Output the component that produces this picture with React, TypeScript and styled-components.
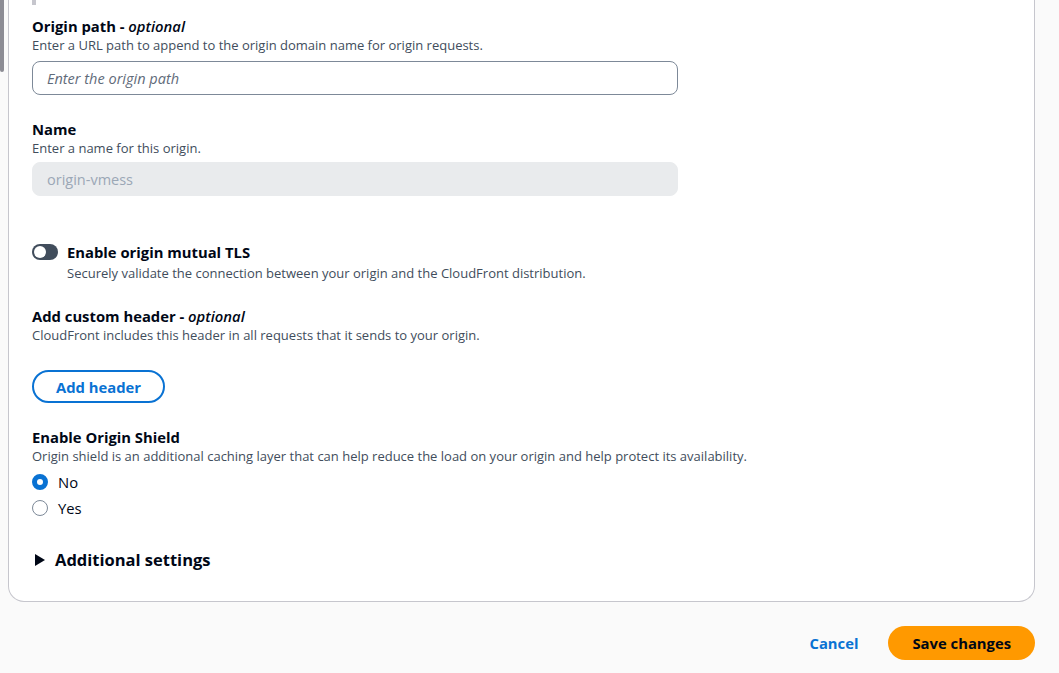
import React from 'react';
import styled, { createGlobalStyle } from 'styled-components';

const Global = createGlobalStyle`
  body { margin: 0; background: #fafafa; font-family: "Open Sans", "Noto Sans", sans-serif; color: #000716; }
`;

const Page = styled.div`
  position: relative;
  padding: 0 24px 0 8px;
  height: 673px;
  box-sizing: border-box;
`;

const ScrollThumb = styled.div`
  position: absolute;
  left: 0;
  top: 0;
  width: 4px;
  height: 72px;
  background: #8c8c94;
  border-radius: 0 0 2px 2px;
`;

const Card = styled.div`
  position: relative;
  background: #fff;
  border: 1px solid #c6c6cd;
  border-top: none;
  border-radius: 0 0 16px 16px;
  padding: 16px 23px 30px;
  display: flex;
  flex-direction: column;
`;

const TopMark = styled.div`
  position: absolute;
  left: 23px;
  top: 0;
  width: 4px;
  height: 5px;
  background: #c6c6cd;
`;

const Field = styled.div<{ $mb: number }>`
  display: flex;
  flex-direction: column;
  margin-bottom: ${p => p.$mb}px;
`;

const Label = styled.div`
  font-size: 14.8px;
  font-weight: 700;
  line-height: 20px;
  em { font-weight: 600; }
`;

const Desc = styled.div`
  font-size: 13px;
  line-height: 18px;
  color: #414d5c;
`;

const Input = styled.div<{ $disabled?: boolean }>`
  margin-top: 7px;
  width: 646px;
  height: 34px;
  box-sizing: border-box;
  border-radius: 8px;
  padding: 0 14px;
  display: flex;
  align-items: center;
  font-size: 14.5px;
  border: ${p => (p.$disabled ? '1px solid #e9ebed' : '1px solid #7d8998')};
  background: ${p => (p.$disabled ? '#e9ebed' : '#fff')};
  color: ${p => (p.$disabled ? '#9ba7b6' : '#5f6b7a')};
  font-style: ${p => (p.$disabled ? 'normal' : 'italic')};
`;

const ToggleRow = styled.div`
  display: flex;
  gap: 9px;
  align-items: flex-start;
  margin-bottom: 24px;
`;

const Toggle = styled.div`
  width: 26px;
  height: 16px;
  border-radius: 8px;
  background: #414d5c;
  position: relative;
  margin-top: 2px;
  &::after {
    content: '';
    position: absolute;
    left: 2px;
    top: 2px;
    width: 12px;
    height: 12px;
    border-radius: 50%;
    background: #fff;
  }
`;

const OutlineButton = styled.button`
  align-self: flex-start;
  height: 33px;
  padding: 0 22px;
  border: 2px solid #0972d3;
  border-radius: 20px;
  background: #fff;
  color: #0972d3;
  font: 700 14.8px "Open Sans", sans-serif;
  margin-bottom: 24px;
`;

const RadioRow = styled.label`
  display: flex;
  align-items: center;
  gap: 10px;
  font-size: 14.8px;
  height: 26px;
`;

const Radio = styled.span<{ $checked?: boolean }>`
  width: 16px;
  height: 16px;
  box-sizing: border-box;
  border-radius: 50%;
  border: ${p => (p.$checked ? '5px solid #0972d3' : '1px solid #7d8998')};
  background: #fff;
`;

const Expander = styled.div`
  display: flex;
  align-items: center;
  gap: 10px;
  font-size: 16.5px;
  font-weight: 700;
  margin-top: 27px;
  padding-left: 3px;
`;

const Footer = styled.div`
  display: flex;
  justify-content: flex-end;
  align-items: center;
  gap: 18px;
  margin-top: 24px;
`;

const LinkButton = styled.button`
  background: none;
  border: none;
  color: #0972d3;
  font: 700 14.8px "Open Sans", sans-serif;
  padding: 0 12px;
`;

const PrimaryButton = styled.button`
  height: 34px;
  padding: 0 24px;
  border: none;
  border-radius: 20px;
  background: #ff9900;
  color: #000716;
  font: 700 14.8px "Open Sans", sans-serif;
`;

export default function App() {
  return (
    <Page>
      <Global />
      <ScrollThumb />
      <Card>
        <TopMark />
        <Field $mb={24}>
          <Label>Origin path - <em>optional</em></Label>
          <Desc>Enter a URL path to append to the origin domain name for origin requests.</Desc>
          <Input>Enter the origin path</Input>
        </Field>
        <Field $mb={46}>
          <Label>Name</Label>
          <Desc>Enter a name for this origin.</Desc>
          <Input $disabled style={{ marginTop: 5 }}>origin-vmess</Input>
        </Field>
        <ToggleRow>
          <Toggle />
          <div>
            <Label>Enable origin mutual TLS</Label>
            <Desc style={{ marginTop: 2 }}>Securely validate the connection between your origin and the CloudFront distribution.</Desc>
          </div>
        </ToggleRow>
        <Field $mb={26}>
          <Label>Add custom header - <em>optional</em></Label>
          <Desc>CloudFront includes this header in all requests that it sends to your origin.</Desc>
        </Field>
        <OutlineButton>Add header</OutlineButton>
        <Field $mb={4}>
          <Label>Enable Origin Shield</Label>
          <Desc>Origin shield is an additional caching layer that can help reduce the load on your origin and help protect its availability.</Desc>
        </Field>
        <RadioRow><Radio $checked />No</RadioRow>
        <RadioRow><Radio />Yes</RadioRow>
        <Expander>
          <svg width="10" height="12" viewBox="0 0 10 12"><path d="M0 0 L10 6 L0 12 Z" fill="#000716" /></svg>
          Additional settings
        </Expander>
      </Card>
      <Footer>
        <LinkButton>Cancel</LinkButton>
        <PrimaryButton>Save changes</PrimaryButton>
      </Footer>
    </Page>
  );
}
